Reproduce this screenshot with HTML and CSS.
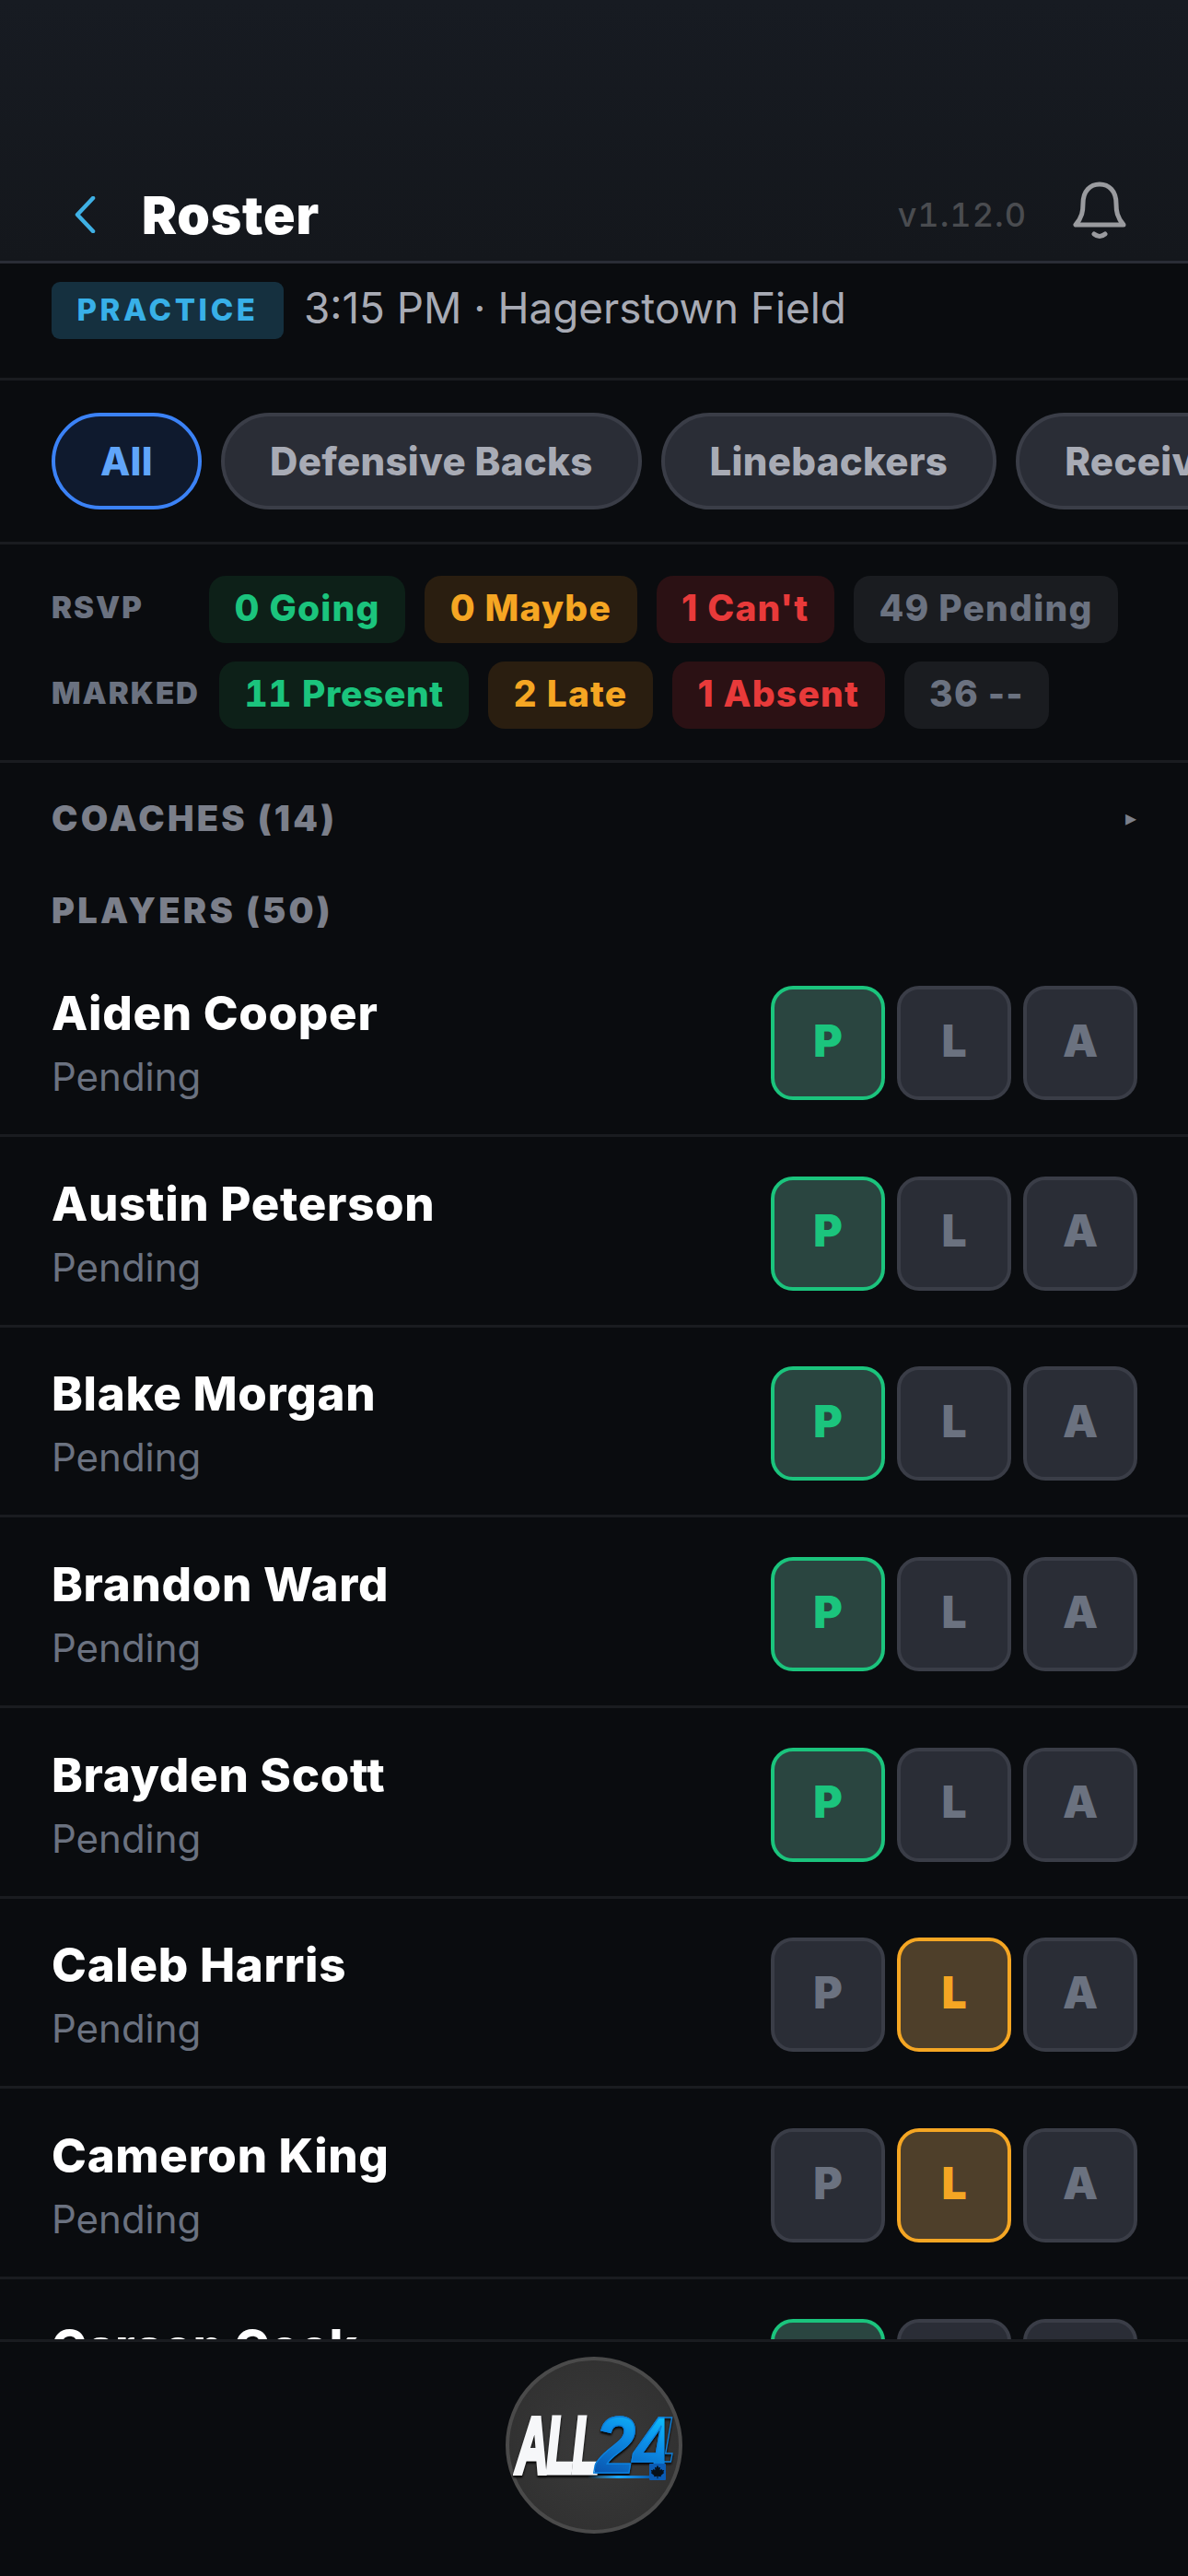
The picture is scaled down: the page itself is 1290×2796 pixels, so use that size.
FILE: index.html
```html
<!DOCTYPE html>
<html lang="en">
<head>
    <meta charset="UTF-8">
    <meta name="viewport" content="width=device-width, initial-scale=1.0">
    <title>Roster</title>
    <link rel="stylesheet" href="styles.css">
</head>
<body>
    <div class="app">
        <header class="topbar">
            <svg class="back" width="24" height="40" viewBox="0 0 24 40"><path d="M21 2 L4 20 L21 38" fill="none" stroke="#3fb0e4" stroke-width="4.5" stroke-linecap="round" stroke-linejoin="round"/></svg>
            <h1>Roster</h1>
            <span class="version">v1.12.0</span>
            <svg class="bell" width="58" height="64" viewBox="0 0 58 64"><path d="M3 47 H55 C48 39 47 32 47 24 C47 10 39 3 29 3 C19 3 11 10 11 24 C11 32 10 39 3 47 Z" fill="none" stroke="#9a9b9f" stroke-width="5" stroke-linejoin="round"/><path d="M23 57 Q29 62 35 57" fill="none" stroke="#9a9b9f" stroke-width="5" stroke-linecap="round"/></svg>
        </header>

        <div class="event">
            <span class="tag">PRACTICE</span>
            <span class="event-info">3:15 PM · Hagerstown Field</span>
        </div>

        <div class="chips">
            <span class="chip active">All</span>
            <span class="chip">Defensive Backs</span>
            <span class="chip">Linebackers</span>
            <span class="chip">Receivers</span>
        </div>

        <div class="stats">
            <div class="stat-row">
                <span class="stat-label short">RSVP</span>
                <span class="pill green">0 Going</span>
                <span class="pill amber">0 Maybe</span>
                <span class="pill red">1 Can't</span>
                <span class="pill grey">49 Pending</span>
            </div>
            <div class="stat-row">
                <span class="stat-label">MARKED</span>
                <span class="pill green tnum">11 Present</span>
                <span class="pill amber">2 Late</span>
                <span class="pill red">1 Absent</span>
                <span class="pill grey">36 --</span>
            </div>
        </div>

        <div class="list">
            <div class="section-head coaches"><span>COACHES (14)</span><span class="caret">▸</span></div>
            <div class="section-head players"><span>PLAYERS (50)</span></div>

            <div class="row">
                <div class="who"><div class="name">Aiden Cooper</div><div class="status">Pending</div></div>
                <div class="marks"><span class="mark on-p">P</span><span class="mark">L</span><span class="mark">A</span></div>
            </div>
            <div class="row">
                <div class="who"><div class="name">Austin Peterson</div><div class="status">Pending</div></div>
                <div class="marks"><span class="mark on-p">P</span><span class="mark">L</span><span class="mark">A</span></div>
            </div>
            <div class="row">
                <div class="who"><div class="name">Blake Morgan</div><div class="status">Pending</div></div>
                <div class="marks"><span class="mark on-p">P</span><span class="mark">L</span><span class="mark">A</span></div>
            </div>
            <div class="row">
                <div class="who"><div class="name">Brandon Ward</div><div class="status">Pending</div></div>
                <div class="marks"><span class="mark on-p">P</span><span class="mark">L</span><span class="mark">A</span></div>
            </div>
            <div class="row">
                <div class="who"><div class="name">Brayden Scott</div><div class="status">Pending</div></div>
                <div class="marks"><span class="mark on-p">P</span><span class="mark">L</span><span class="mark">A</span></div>
            </div>
            <div class="row">
                <div class="who"><div class="name">Caleb Harris</div><div class="status">Pending</div></div>
                <div class="marks"><span class="mark">P</span><span class="mark on-l">L</span><span class="mark">A</span></div>
            </div>
            <div class="row">
                <div class="who"><div class="name">Cameron King</div><div class="status">Pending</div></div>
                <div class="marks"><span class="mark">P</span><span class="mark on-l">L</span><span class="mark">A</span></div>
            </div>
            <div class="row">
                <div class="who"><div class="name">Carson Cook</div><div class="status">Pending</div></div>
                <div class="marks"><span class="mark on-p">P</span><span class="mark">L</span><span class="mark">A</span></div>
            </div>
        </div>

        <footer class="tabbar">
            <div class="logo">
                <span class="logo-text"><span class="logo-all">ALL</span><span class="logo-num">24</span></span>
                <span class="logo-glow"></span>
                <svg class="logo-leaf" width="18" height="18" viewBox="-2 -2 20 20"><path d="M8 0 L9.6 3 L11.4 2.2 L10.8 6 L13 4.4 L13.6 6 L16 5.8 L15 8.4 L16 9.2 L12 12.4 L12.4 13.8 L8.5 13.2 L8.5 16 L7.5 16 L7.5 13.2 L3.6 13.8 L4 12.4 L0 9.2 L1 8.4 L0 5.8 L2.4 6 L3 4.4 L5.2 6 L4.6 2.2 L6.4 3 Z" fill="#07101a"/></svg>
            </div>
        </footer>
    </div>
</body>
</html>
```

FILE: styles.css
```css
* {
    box-sizing: border-box;
}
html, body {
    margin: 0;
    padding: 0;
}
body {
    background: #0a0c0f;
    font-family: Inter, "Noto Sans", sans-serif;
    color: #fff;
}
.app {
    width: 1290px;
    height: 2796px;
    display: flex;
    flex-direction: column;
    overflow: hidden;
}

/* top bar */
.topbar {
    height: 286px;
    flex: none;
    display: flex;
    align-items: center;
    padding: 196px 67px 13px 80px;
    background: linear-gradient(#171b22, #14171c);
    border-bottom: 3px solid #2a2d36;
}
.back {
    flex: none;
}
.topbar h1 {
    margin: 2px 0 0 50px;
    font-size: 57px;
    font-weight: 900;
    letter-spacing: 0.8px;
    line-height: 70px;
}
.version {
    margin-left: auto;
    font-size: 36px;
    font-weight: 500;
    letter-spacing: 1px;
    font-variant-numeric: tabular-nums;
    color: #4a4c50;
}
.bell {
    flex: none;
    margin: -8px 0 0 50px;
}

/* event line */
.event {
    flex: none;
    height: 127px;
    display: flex;
    align-items: flex-start;
    padding: 20px 56px 0;
    border-bottom: 3px solid #1a1c20;
}
.tag {
    height: 62px;
    width: 252px;
    padding-bottom: 2px;
    display: flex;
    align-items: center;
    justify-content: center;
    background: #15303f;
    border-radius: 9px;
    color: #38b0e8;
    font-size: 33px;
    font-weight: 800;
    letter-spacing: 3.6px;
}
.event-info {
    margin-left: 22px;
    line-height: 58px;
    font-size: 45.8px;
    color: #a8abb5;
}

/* filter chips */
.chips {
    flex: none;
    height: 178px;
    display: flex;
    align-items: flex-start;
    gap: 21px;
    padding: 35px 0 0 56px;
    overflow: hidden;
    border-bottom: 3px solid #1a1c20;
}
.chip {
    flex: none;
    height: 105px;
    line-height: 97px;
    padding: 0 49px;
    border: 4px solid #3a3d47;
    border-radius: 53px;
    background: #2a2d36;
    color: #a8abb5;
    font-size: 42px;
    font-weight: 800;
    letter-spacing: 0.3px;
}
.chip.active {
    background: #0f1a2e;
    border-color: #3b82f6;
    color: #60a5fa;
}

/* rsvp + marked counts */
.stats {
    flex: none;
    height: 237px;
    display: flex;
    flex-direction: column;
    gap: 20px;
    padding: 34px 56px 0;
    border-bottom: 3px solid #1a1c20;
}
.stat-row {
    display: flex;
    align-items: center;
    gap: 21px;
}
.stat-label {
    font-size: 33px;
    font-weight: 900;
    letter-spacing: 2px;
    color: #6b7280;
    margin-top: -6px;
}
.stat-label.short {
    width: 150px;
}
.pill {
    height: 73px;
    line-height: 70px;
    padding: 0 27.5px;
    border-radius: 18px;
    font-size: 39px;
    font-weight: 800;
    letter-spacing: 1.2px;
}
.pill.tnum {
    font-variant-numeric: tabular-nums;
    letter-spacing: 0.6px;
}
.green {
    background: #0d2018;
    color: #1bc47d;
}
.amber {
    background: #2a1e10;
    color: #f5a623;
}
.red {
    background: #2b1114;
    color: #e83a3a;
}
.grey {
    background: #1a1c20;
    color: #6b7280;
}

/* roster list */
.list {
    flex: 1;
    overflow: hidden;
}
.section-head {
    display: flex;
    justify-content: space-between;
    align-items: center;
    padding: 28px 56px 28px;
    line-height: 44px;
    font-size: 38px;
    font-weight: 900;
    letter-spacing: 3.3px;
    color: #7b7f8a;
}
.section-head.coaches {
    padding-top: 38px;
}
.section-head.players {
    padding-bottom: 17.33px;
}
.caret {
    font-family: "DejaVu Sans", sans-serif;
    font-size: 24px;
    letter-spacing: 0;
}
.row {
    height: 206.67px;
    display: flex;
    align-items: center;
    justify-content: space-between;
    padding: 6px 55px 0 56px;
    border-bottom: 3px solid #1a1c20;
}
.name {
    font-size: 51px;
    font-weight: 800;
    letter-spacing: 0.7px;
    line-height: 62px;
}
.status {
    margin-top: 12px;
    font-size: 42px;
    line-height: 52px;
    color: #6b7280;
}
.marks {
    display: flex;
    gap: 13px;
}
.mark {
    width: 124px;
    height: 124px;
    display: flex;
    align-items: center;
    justify-content: center;
    padding-bottom: 6px;
    background: #2a2d36;
    border: 4.5px solid #3a3d47;
    border-radius: 24px;
    color: #6b7280;
    font-size: 48px;
    font-weight: 900;
}
.mark.on-p {
    background: #2a4540;
    border-color: #1bc47d;
    color: #1bc47d;
}
.mark.on-l {
    background: #4e3f2a;
    border-color: #f5a623;
    color: #f5a623;
}

/* bottom bar with logo */
.tabbar {
    flex: none;
    height: 257px;
    padding-top: 16px;
    display: flex;
    justify-content: center;
    background: #0a0c0f;
    border-top: 3px solid #1a1c20;
}
.logo {
    position: relative;
    width: 192px;
    height: 192px;
    display: flex;
    align-items: center;
    justify-content: center;
    border-radius: 50%;
    border: 4.5px solid #4a4a4a;
    background: radial-gradient(circle, #3a3a3a, #2e2e2e);
}
.logo-text {
    flex: none;
    width: 170px;
    display: flex;
    font-family: "Liberation Sans", sans-serif;
    font-size: 88px;
    font-weight: 700;
    font-style: italic;
    line-height: 70px;
    filter: drop-shadow(0 2px 1px #000);
}
.logo-all,
.logo-num {
    flex: none;
    transform-origin: left center;
}
.logo-all {
    width: 86px;
    letter-spacing: -4px;
    transform: scaleX(0.56);
    color: #f6f7f9;
    -webkit-text-stroke: 5px #f6f7f9;
}
.logo-num {
    width: 84px;
    letter-spacing: -3px;
    transform: scaleX(0.9);
    background: linear-gradient(20deg, #0a4fa8, #0c8fe8 60%, #0fc4ff);
    -webkit-background-clip: text;
    background-clip: text;
    color: transparent;
    -webkit-text-stroke: 1.5px #0d80dc;
}
.logo-glow {
    position: absolute;
    left: 85px;
    top: 125px;
    width: 67px;
    height: 3px;
    background: linear-gradient(90deg, transparent, #1aa7ff 50%, #0a5fb0);
}
.logo-leaf {
    position: absolute;
    left: 152px;
    top: 112px;
    background: #0b5cb5;
    border-radius: 1px;
}
```
